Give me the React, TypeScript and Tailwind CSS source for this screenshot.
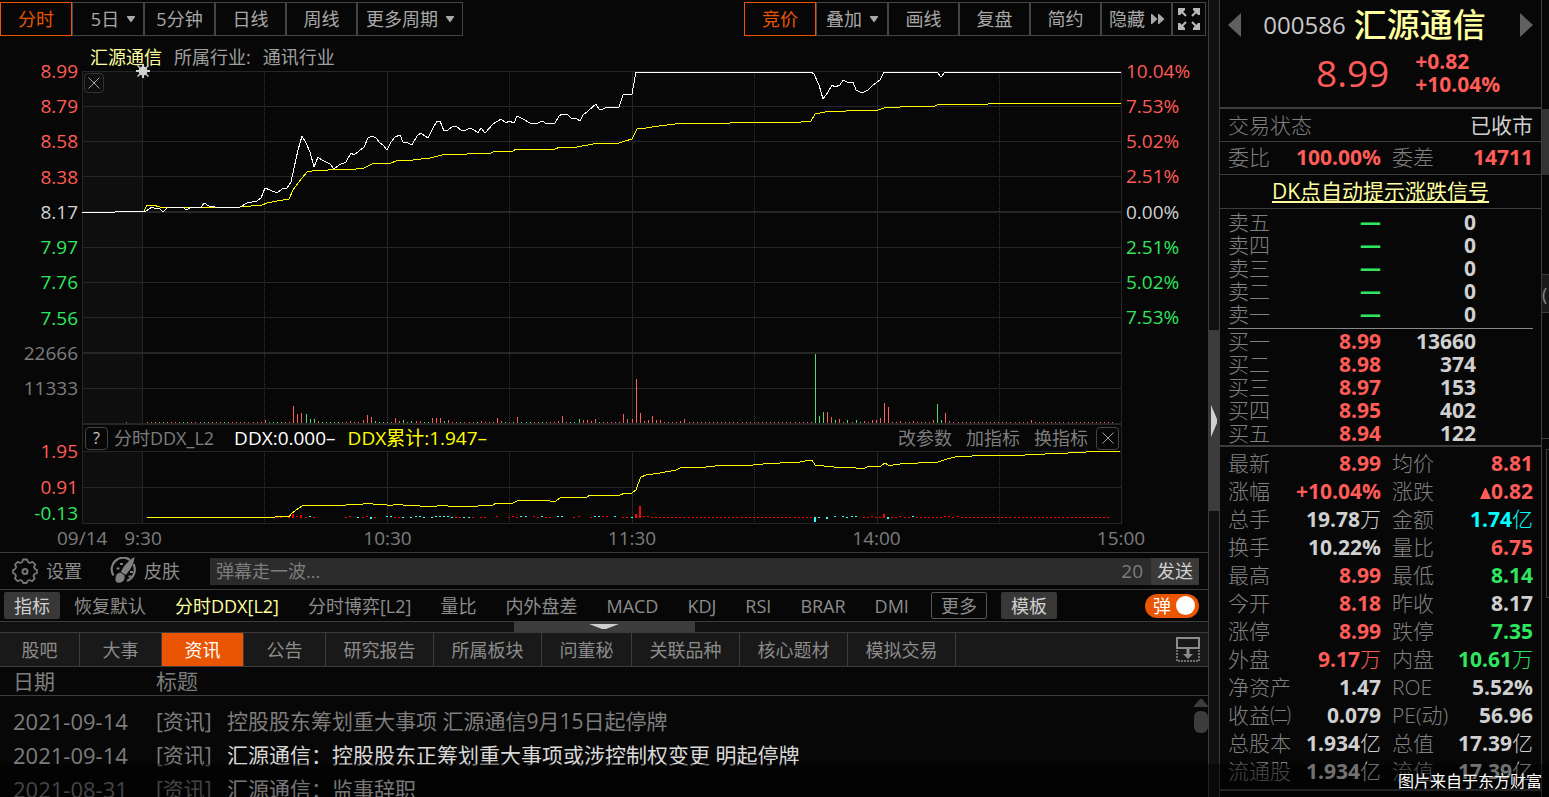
import { useState } from "react";
import clsx from "clsx";

const RED = "text-[#ff5b57]";
const GREEN = "text-[#2fe65f]";
const WHITE = "text-[#d0d0d0]";
const CYAN = "text-[#00ffff]";

const periods = [
  { label: "分时", width: "w-[72px]", active: true },
  { label: "5日", width: "w-[72px] pl-2.5", arrow: true },
  { label: "5分钟", width: "w-[71px]" },
  { label: "日线", width: "w-[71px]" },
  { label: "周线", width: "w-[71px]" },
  { label: "更多周期", width: "w-[106px]", arrow: true },
];

const tools = [
  { label: "竞价", width: "w-[72px]", active: true },
  { label: "叠加", width: "w-[72px]", arrow: true },
  { label: "画线", width: "w-[71px]" },
  { label: "复盘", width: "w-[71px]" },
  { label: "简约", width: "w-[71px]" },
];

const priceLabels = [
  ["8.99", RED],
  ["8.79", RED],
  ["8.58", RED],
  ["8.38", RED],
  ["8.17", WHITE],
  ["7.97", GREEN],
  ["7.76", GREEN],
  ["7.56", GREEN],
  ["22666", "text-[#7d7d7d]"],
  ["11333", "text-[#7d7d7d]"],
];

const percentLabels = [
  ["10.04%", RED],
  ["7.53%", RED],
  ["5.02%", RED],
  ["2.51%", RED],
  ["0.00%", WHITE],
  ["2.51%", GREEN],
  ["5.02%", GREEN],
  ["7.53%", GREEN],
];

const pricePoints =
  "82,212 115,212 117,211 146,211 149,209 152,207 154,208 160,209 163,212 168,207 182,207 187,210 191,207 201,208 204,203 209,206 215,207 240,207 247,203 257,201 261,198 265,188 270,190 277,193 282,189 287,188 291,182 294,168 298,150 302,136 306,143 310,152 314,167 318,157 322,160 330,164 334,169 339,165 346,162 351,153 354,155 359,151 364,147 368,138 372,136 376,138 380,143 383,145 387,150 391,142 395,137 400,135 403,142 408,143 412,145 417,136 421,133 425,136 428,138 433,128 437,121 440,121 444,131 448,130 453,126 457,127 461,130 466,130 470,128 474,130 478,133 481,128 485,133 493,124 501,119 506,123 509,121 514,123 517,116 523,119 530,123 538,123 542,121 547,124 555,123 559,116 562,114 567,114 571,118 577,119 580,121 583,115 588,111 596,104 599,109 603,109 607,107 619,107 623,95 625,94 632,94 634,83 636,72 811,72 814,74 819,85 823,99 828,92 832,85 835,87 840,85 843,80 847,82 853,82 856,90 862,93 868,90 873,85 880,80 884,72 937,72 941,77 945,72 1121,72";

const averagePoints =
  "144,211 147,205 153,205 160,207 240,207 251,206 262,205 267,203 277,201 289,199 293,190 302,178 307,172 312,171 328,170 356,169 364,168 372,164 391,163 396,161 413,160 430,158 442,155 467,154 491,153 495,151 513,151 516,149 555,149 560,147 577,147 593,144 605,143 619,143 625,141 632,139 637,129 646,128 659,126 683,123 730,123 760,122 801,122 811,121 815,114 825,112 846,111 878,110 887,107 900,107 935,106 939,104 988,104 990,103 1121,103";

const ddxPoints =
  "147,517 275,517 277,516 285,516 289,517 291,514 296,510 302,506 306,505 310,506 313,505 346,505 348,504 363,504 366,503 370,503 373,504 383,504 387,505 393,505 396,504 400,504 403,505 416,505 420,506 437,506 439,505 446,505 448,506 478,506 493,505 496,503 513,503 517,501 531,500 545,500 550,501 556,501 561,497 587,497 590,495 620,495 625,493 632,493 636,490 638,484 641,477 646,475 660,473 676,470 680,468 706,467 725,465 753,465 763,464 780,463 800,462 810,460 812,460 815,465 819,466 822,465 826,467 830,466 834,467 853,467 856,468 865,468 869,466 881,466 885,463 888,465 893,465 900,464 918,463 938,462 947,459 955,457 972,456 995,455 1025,455 1045,454 1068,453 1086,452 1088,451 1120,451";

// minute of the session -> bar height
const volumes: Record<number, number> = {
  30: 3, 37: 17, 38: 9, 39: 10, 40: 9, 41: 4, 42: 4, 43: 2, 51: 2, 54: 3, 55: 8, 56: 6, 57: 2,
  62: 5, 63: 2, 64: 3, 66: 2, 67: 2, 68: 2, 71: 5, 72: 5, 73: 5, 74: 2, 75: 3, 83: 2, 87: 5,
  88: 2, 92: 6, 102: 2, 103: 7, 107: 4, 108: 3, 109: 3, 110: 2, 111: 4, 118: 9, 119: 4, 120: 4,
  121: 44, 122: 10, 123: 2, 124: 3, 125: 7, 126: 3, 127: 3, 132: 2, 133: 4, 165: 69, 166: 7,
  167: 11, 168: 11, 169: 6, 170: 3, 171: 4, 173: 3, 175: 3, 177: 2, 179: 3, 180: 3, 181: 5,
  182: 20, 183: 16, 186: 2, 189: 2, 194: 3, 195: 19, 196: 3, 197: 10, 198: 2, 218: 3,
};

const falling = new Set([
  3, 5, 10, 11, 15, 17, 20, 31, 32, 33, 34, 40, 41, 42, 44, 45, 46, 47, 48, 57, 58, 59, 60, 64, 66,
  69, 70, 74, 78, 82, 89, 91, 93, 94, 95, 98, 105, 106, 107, 112, 165, 166, 167, 170, 173, 175, 176,
  195, 196,
]);

// [minute, height above the zero line (negative goes below), inflow]
const ddxBars: [number, number, boolean][] = [
  [33, 1, true], [34, 1, true], [36, 1, true], [37, 4, true], [38, 2, true], [39, 3, true],
  [40, 1, true], [41, 2, false], [42, 1, true], [50, 1, true], [51, 2, true], [53, 1, false],
  [54, 1, true], [55, 2, true], [56, -2, false], [57, 1, true], [60, 2, false], [61, 2, false],
  [62, 1, true], [63, 1, true], [64, 1, false], [66, 1, false], [67, 2, false], [68, 2, false],
  [69, 1, false], [71, 1, false], [72, 2, false], [73, 2, false], [74, 2, false], [75, 2, false],
  [76, 1, false], [77, 1, true], [78, 1, true], [79, 1, false], [80, 1, false], [81, 1, true],
  [83, 1, true], [84, 1, true], [87, 2, true], [90, 1, true], [91, 2, true], [92, 1, true],
  [93, 2, false], [94, 2, false], [96, 2, true], [97, 1, true], [98, 2, false], [99, 1, true],
  [100, 1, true], [102, 2, false], [103, 2, false], [106, 1, true], [107, 2, true], [110, 1, true],
  [111, 2, false], [112, 2, false], [113, 2, true], [114, 2, true], [116, 2, false], [118, 1, true],
  [119, 1, true], [120, 1, false], [121, 4, true], [122, 12, true], [123, 2, true], [124, 2, true],
  [165, -5, false], [166, 1, false], [168, -2, false], [170, 2, false], [172, 2, false],
  [173, 1, false], [174, 2, false], [175, 2, false], [178, 1, true], [179, 2, true], [182, 4, true],
  [183, -2, false], [186, 2, true], [189, 2, false], [197, 2, true], [198, 2, true], [200, 2, true],
];

const minuteX = (minute: number) => Math.floor(143 + minute * 4.075);

const solidColumns = [142, 387, 632, 877];
const dottedColumns = [264, 509, 754, 999];

const indicators = ["分时博弈[L2]", "量比", "内外盘差", "MACD", "KDJ", "RSI", "BRAR", "DMI"];

const tabs = [
  ["股吧", "w-[80px]"],
  ["大事", "w-[82px]"],
  ["资讯", "w-[82px]"],
  ["公告", "w-[82px]"],
  ["研究报告", "w-[108px]"],
  ["所属板块", "w-[108px]"],
  ["问董秘", "w-[90px]"],
  ["关联品种", "w-[108px]"],
  ["核心题材", "w-[108px]"],
  ["模拟交易", "w-[108px]"],
];

const news = [
  { date: "2021-09-14", title: "控股股东筹划重大事项 汇源通信9月15日起停牌", read: true },
  { date: "2021-09-14", title: "汇源通信：控股股东正筹划重大事项或涉控制权变更 明起停牌" },
  { date: "2021-08-31", title: "汇源通信：监事辞职" },
];

const asks = ["卖五", "卖四", "卖三", "卖二", "卖一"];

const bids = [
  ["买一", "8.99", "13660"],
  ["买二", "8.98", "374"],
  ["买三", "8.97", "153"],
  ["买四", "8.95", "402"],
  ["买五", "8.94", "122"],
];

type Stat = { label: string; value: string; unit?: string; color: string; up?: boolean };

const stats: [Stat, Stat][] = [
  [{ label: "最新", value: "8.99", color: RED }, { label: "均价", value: "8.81", color: RED }],
  [{ label: "涨幅", value: "+10.04%", color: RED }, { label: "涨跌", value: "0.82", color: RED, up: true }],
  [{ label: "总手", value: "19.78", unit: "万", color: WHITE }, { label: "金额", value: "1.74", unit: "亿", color: CYAN }],
  [{ label: "换手", value: "10.22%", color: WHITE }, { label: "量比", value: "6.75", color: RED }],
  [{ label: "最高", value: "8.99", color: RED }, { label: "最低", value: "8.14", color: GREEN }],
  [{ label: "今开", value: "8.18", color: RED }, { label: "昨收", value: "8.17", color: WHITE }],
  [{ label: "涨停", value: "8.99", color: RED }, { label: "跌停", value: "7.35", color: GREEN }],
  [{ label: "外盘", value: "9.17", unit: "万", color: RED }, { label: "内盘", value: "10.61", unit: "万", color: GREEN }],
  [{ label: "净资产", value: "1.47", color: WHITE }, { label: "ROE", value: "5.52%", color: WHITE }],
  [{ label: "收益㈡", value: "0.079", color: WHITE }, { label: "PE(动)", value: "56.96", color: WHITE }],
  [{ label: "总股本", value: "1.934", unit: "亿", color: WHITE }, { label: "总值", value: "17.39", unit: "亿", color: WHITE }],
  [{ label: "流通股", value: "1.934", unit: "亿", color: WHITE }, { label: "流值", value: "17.39", unit: "亿", color: WHITE }],
];

function ToolButton({ label, width, active, arrow }: { label: string; width: string; active?: boolean; arrow?: boolean }) {
  return (
    <button
      className={clsx(
        "flex h-[34px] shrink-0 items-center justify-center gap-2 border text-lg leading-6",
        width,
        active ? "border-[#ea5504] text-[#ea5504]" : "border-[#444] text-[#a8a8a8]"
      )}
    >
      {label}
      {arrow && (
        <svg width="8" height="6" viewBox="0 0 8 6" fill="currentColor">
          <path d="M0 0h8v1L4.500 6h-1L0 1z" />
        </svg>
      )}
    </button>
  );
}

function CloseIcon() {
  return (
    <svg width="12" height="12" viewBox="0 0 12 12" stroke="#a0a0a0" strokeWidth="1">
      <path d="M0.500 0.500l11 11M11.500 0.500l-11 11" />
    </svg>
  );
}

function Toolbar() {
  return (
    <div className="flex h-9 shrink-0 justify-between pt-0.5 pr-0.5">
      <div className="flex">
        {periods.map((item) => (
          <ToolButton key={item.label} {...item} />
        ))}
      </div>
      <div className="flex">
        {tools.map((item) => (
          <ToolButton key={item.label} {...item} />
        ))}
        <button className="flex h-[34px] w-[71px] items-center justify-center gap-1.5 border border-[#444] text-lg leading-6 text-[#a8a8a8]">
          隐藏
          <svg width="13" height="10" viewBox="0 0 13 10" fill="currentColor">
            <path d="M0 0h1l5 4.500v1L1 10H0zM7 0h1l5 4.500v1L8 10H7z" />
          </svg>
        </button>
        <button aria-label="全屏" className="flex h-[34px] w-[34px] items-center justify-center border border-[#444] text-[#b8b8b8]">
          <svg width="22" height="22" viewBox="0 0 22 22" fill="currentColor" stroke="currentColor" strokeWidth="2">
            <path d="M2 2l6 6M20 2l-6 6M2 20l6-6M20 20l-6-6" fill="none" />
            <path d="M0 0h7v2L2 7H0zM22 0v7h-2l-5-5V0zM0 22v-7h2l5 5v2zM22 22h-7v-2l5-5h2z" stroke="none" />
          </svg>
        </button>
      </div>
    </div>
  );
}

function PriceChart() {
  const minutes = Array.from({ length: 238 }, (_, i) => i + 1);
  return (
    <svg
      className="block h-[354px] w-full overflow-visible"
      viewBox="82 71 1040 354"
      preserveAspectRatio="none"
      shapeRendering="crispEdges"
    >
      <rect x="83" y="72" width="59" height="351" fill="#0e0e0e" />
      <g fill="#262626">
        {[71, 106, 141, 176, 247, 282, 317, 388].map((y) => (
          <rect key={y} x="82" y={y} width="1040" height="1" />
        ))}
        {[211, 352, 423].map((y) => (
          <rect key={y} x="82" y={y} width="1040" height="2" />
        ))}
        {[82, ...solidColumns, 1121].map((x) => (
          <rect key={x} x={x} y="71" width="1" height="353" />
        ))}
      </g>
      {dottedColumns.map((x) => (
        <path key={x} d={`M${x + 0.5} 72V423`} stroke="#333" strokeDasharray="1 1" />
      ))}
      {minutes.map((m) => {
        const h = volumes[m] ?? 1;
        return <rect key={m} x={minuteX(m)} y={423 - h} width="1" height={h} fill={falling.has(m) ? "#4fdc6c" : "#ff5b57"} />;
      })}
      <rect x="126" y="422" width="1" height="1" fill="#ff5b57" />
      <polyline points={averagePoints} fill="none" stroke="#ffff00" />
      <polyline points={pricePoints} fill="none" stroke="#ffffff" />
      <g fill="#d0d0d0" shapeRendering="auto">
        <circle cx="143" cy="71" r="4.500" />
        <path d="M142 64h2v14h-2zM136 70h14v2h-14zM138 65l11 11-1 1-11-11zM148 65l1 1-11 11-1-1z" />
      </g>
    </svg>
  );
}

function DdxChart() {
  const steady = Array.from({ length: 113 }, (_, i) => i + 125).filter(
    (m) => (m < 165 || m > 176) && !ddxBars.some(([minute]) => minute === m)
  );
  return (
    <svg
      className="block h-[73px] w-full"
      viewBox="82 451 1040 73"
      preserveAspectRatio="none"
      shapeRendering="crispEdges"
    >
      <rect x="83" y="452" width="59" height="71" fill="#0e0e0e" />
      <g fill="#262626">
        {[451, 487, 523].map((y) => (
          <rect key={y} x="82" y={y} width="1040" height="1" />
        ))}
        {[82, ...solidColumns, 1121].map((x) => (
          <rect key={x} x={x} y="451" width="1" height="73" />
        ))}
      </g>
      {dottedColumns.map((x) => (
        <path key={x} d={`M${x + 0.5} 453V523`} stroke="#333" strokeDasharray="1 1" />
      ))}
      {steady.map((m) => (
        <rect key={m} x={minuteX(m) - 1} y="517" width="2" height="1" fill="#ff0000" />
      ))}
      {ddxBars.map(([m, h, inflow]) => (
        <rect
          key={m}
          x={minuteX(m) - 1}
          y={h > 2 ? 518 - h : h === 2 ? 516 : 517}
          width="2"
          height={h > 2 ? h : h < 0 ? -h : 1}
          fill={inflow ? "#ff0000" : "#3fffff"}
        />
      ))}
      <polyline points={ddxPoints} fill="none" stroke="#ffff00" />
    </svg>
  );
}

function ChartPanel() {
  return (
    <section className="shrink-0">
      <div className="flex h-[35px] items-center gap-3 pt-1.5 pl-[90px] text-lg leading-7">
        <span className="text-[#ffffa0]">汇源通信</span>
        <span className="text-[#a0a0a0]">所属行业:</span>
        <span className="text-[#a0a0a0]">通讯行业</span>
      </div>

      <div className="grid grid-cols-[82px_1fr_86px]">
        <div className="-mt-2.5 flex h-[337px] flex-col justify-between pr-1 text-right text-[19px] leading-5">
          {priceLabels.map(([text, color]) => (
            <span key={text} className={color}>{text}</span>
          ))}
        </div>
        <div className="relative">
          <PriceChart />
          <button aria-label="关闭" className="absolute top-0.5 left-0.5 flex size-5 items-center justify-center rounded-sm border border-[#333]">
            <CloseIcon />
          </button>
        </div>
        <div className="-mt-2.5 flex h-[266px] flex-col justify-between pl-1 text-[19px] leading-5">
          {percentLabels.map(([text, color], i) => (
            <span key={i} className={color}>{text}</span>
          ))}
        </div>

        <div />
        <div className="flex h-[26px] items-center justify-between border-x border-[#262626] px-0.5 text-lg leading-6 text-[#7d7d7d]">
          <div className="flex items-center">
            <button className="mr-1.5 flex size-[23px] items-center justify-center rounded-sm border border-[#444] text-base text-[#c8c8c8]">?</button>
            <span>分时DDX_L2</span>
            <span className="ml-5 text-[19px] text-white">DDX:0.000–</span>
            <span className="ml-3 text-[19px] text-[#ffff00]">DDX累计:1.947–</span>
          </div>
          <div className="flex items-center gap-3.5">
            <button>改参数</button>
            <button>加指标</button>
            <button>换指标</button>
            <button aria-label="关闭指标" className="-ml-1.5 flex size-[23px] items-center justify-center rounded-sm border border-[#444]">
              <CloseIcon />
            </button>
          </div>
        </div>
        <div />

        <div className="-mt-2.5 flex h-[83px] flex-col pr-1 text-right text-[19px] leading-5">
          <span className={RED}>1.95</span>
          <span className={clsx("mt-4", RED)}>0.91</span>
          <span className={clsx("mt-1.5", GREEN)}>-0.13</span>
        </div>
        <DdxChart />
        <div />
      </div>

      <div className="flex h-7 items-center pr-[52px] text-[19px] leading-6 text-[#7d7d7d]">
        <span className="w-[108px] pl-[57px]">09/14</span>
        <div className="flex flex-1 justify-between">
          {["9:30", "10:30", "11:30", "14:00", "15:00"].map((time) => (
            <span key={time} className="w-[70px] text-center">{time}</span>
          ))}
        </div>
      </div>
    </section>
  );
}

function CommentBar() {
  return (
    <div className="flex h-[37px] shrink-0 items-center border-t border-[#3c3c3c] pr-[9px] pl-3 text-lg leading-6 text-[#8c8c8c]">
      <button className="flex items-center gap-2">
        <svg width="26" height="26" viewBox="0 0 26 26" fill="none" stroke="#777" strokeWidth="2">
          <path
            d="M11 1.500h4l1 2.500 2 1 2.500-1.200 2.800 2.800L22 9l1 2 2 1v3l-2.500 1-1 2 1.200 2.500-2.800 2.800L17.500 22l-2 1-.8 2h-3.500l-1-2-2-1-2.500 1.200-2.800-2.800L4 18l-1-2-2-1v-3l2.300-1 .9-2L3 6.600l2.800-2.800L8.200 5l2-1z"
            strokeLinejoin="round"
            strokeWidth="1.800"
          />
          <circle cx="13" cy="13.500" r="2.500" />
        </svg>
        设置
      </button>
      <button className="ml-7 flex items-center gap-1.5">
        <svg width="28" height="28" viewBox="0 0 28 28" fill="none" stroke="#808080" strokeWidth="2.200">
          <path d="M20 3A11.500 11.500 0 0 0 3.500 18.500M23.500 7c3 7 .5 13.500-6.500 17" />
          <path d="M24.500 0c-5.500 3-12 10-13.500 15l4.500 3C20 13.500 24 7 24.500 0z" fill="#808080" stroke="none" />
          <path d="M10.500 15.500c-4 .5-4.500 3-5 6-.5 3 1 5 5 4 4-1 4.500-4.500 4-7z" fill="#808080" stroke="none" />
          <path d="M6.500 11.500h3M10 7h3M18.500 19.500h3M20 15h3" />
        </svg>
        皮肤
      </button>
      <div className="ml-[30px] flex h-[27px] flex-1 items-center bg-[#2b2b2b]">
        <input
          aria-label="弹幕"
          placeholder="弹幕走一波..."
          className="h-full min-w-0 flex-1 bg-transparent px-1.5 text-lg placeholder:text-[#7d7d7d] focus:outline-none"
        />
        <span className="px-2 text-[19px] text-[#7d7d7d]">20</span>
        <button className="h-full w-12 bg-[#3a3a3a] text-[#d0d0d0]">发送</button>
      </div>
    </div>
  );
}

function IndicatorBar() {
  const [on, setOn] = useState(true);
  return (
    <div className="flex h-8 shrink-0 items-center border-t border-[#3c3c3c] pr-[9px] pl-1 text-lg leading-6 text-[#8c8c8c]">
      <button className="h-[27px] w-14 rounded-xs bg-[#383838] text-[#d0d0d0]">指标</button>
      <div className="ml-3.5 flex gap-[29px] whitespace-nowrap">
        <button>恢复默认</button>
        <button className="text-[#ffffa0]">分时DDX[L2]</button>
        {indicators.map((name) => (
          <button key={name}>{name}</button>
        ))}
      </div>
      <button className="ml-[22px] h-[27px] w-14 rounded-xs border border-[#555] leading-5">更多</button>
      <button className="ml-3.5 h-[27px] w-14 rounded-xs bg-[#383838] text-[#d0d0d0]">模板</button>
      <button
        role="switch"
        aria-checked={on}
        onClick={() => setOn(!on)}
        className={clsx(
          "ml-auto flex h-6 w-[54px] items-center justify-between rounded-full pr-1 pl-2 text-white",
          on ? "bg-[#ea5504]" : "bg-[#555]"
        )}
      >
        弹
        <span className="size-[19px] rounded-full bg-white" />
      </button>
    </div>
  );
}

function NewsPanel() {
  const [current, setCurrent] = useState("资讯");
  return (
    <section className="flex min-h-0 flex-1 flex-col">
      {/* drag handle between chart and news */}
      <div className="flex h-[11px] shrink-0 justify-center border-t border-[#3c3c3c] bg-[#111]">
        <div className="flex w-[181px] justify-center bg-[#3c3c3c]">
          <svg width="30" height="10" viewBox="0 0 30 10" fill="#d0d0d0">
            <path d="M0 2h30L17 7h-4z" />
          </svg>
        </div>
      </div>

      <div className="flex h-[35px] shrink-0 items-stretch border-y border-[#3c3c3c] bg-[#191919] text-lg leading-6">
        {tabs.map(([label, width]) => (
          <button
            key={label}
            onClick={() => setCurrent(label)}
            className={clsx(
              "border-r border-[#3c3c3c]",
              width,
              current === label ? "bg-[#ea5504] text-white" : "text-[#8c8c8c]"
            )}
          >
            {label}
          </button>
        ))}
        <button aria-label="展开" className="ml-auto pr-2">
          <svg width="24" height="25" viewBox="0 0 24 25" fill="none" stroke="#8c8c8c">
            <rect x="1" y="1" width="22" height="10" strokeWidth="2" />
            <path d="M1 13v11h22V13" strokeDasharray="2 1" strokeWidth="1.500" />
            <path d="M12 12v6" strokeWidth="3" />
            <path d="M7 17h10l-5 5z" fill="#8c8c8c" stroke="none" />
          </svg>
        </button>
      </div>

      <div className="relative min-h-0 flex-1 overflow-hidden">
        <table className="w-full table-fixed border-collapse text-left text-[21px] leading-7 text-[#7d7d7d]">
          <colgroup>
            <col className="w-[156px]" />
            <col className="w-[71px]" />
            <col />
          </colgroup>
          <thead>
            <tr className="h-7 border-b border-[#3c3c3c]">
              <th className="pl-[13px] font-normal">日期</th>
              <th colSpan={2} className="font-normal">标题</th>
            </tr>
          </thead>
          <tbody>
            <tr className="h-2"><td colSpan={3} /></tr>
            {news.map((item) => (
              <tr key={item.title} className="h-[34px]">
                <td className="pl-[13px] text-[22px]">{item.date}</td>
                <td>[资讯]</td>
                <td>
                  <a href="#" className={item.read ? "text-[#7d7d7d]" : "text-[#d8d8d8]"}>{item.title}</a>
                </td>
              </tr>
            ))}
          </tbody>
        </table>
        <div className="absolute top-8 right-0 flex flex-col items-center gap-1">
          <svg width="14" height="8" viewBox="0 0 14 8" fill="#3c3c3c">
            <path d="M6 0h2l6 7v1H0V7z" />
          </svg>
          <div className="h-[22px] w-3.5 rounded-md bg-[#3c3c3c]" />
        </div>
      </div>
    </section>
  );
}

function StatCells({ stat, second }: { stat: Stat; second?: boolean }) {
  return (
    <>
      <th scope="row" className={clsx("font-light whitespace-nowrap text-[#808080]", second && "pl-[11px]")}>{stat.label}</th>
      <td className={clsx("text-right font-bold whitespace-nowrap", stat.color)}>
        {stat.up && (
          <svg className="inline" width="11" height="11" viewBox="0 0 11 11" fill="currentColor">
            <path d="M5 0h1l5 11H0z" />
          </svg>
        )}
        {stat.value}
        {stat.unit && <span className="font-light">{stat.unit}</span>}
      </td>
    </>
  );
}

function QuotePanel() {
  return (
    <aside className="w-[323px] shrink-0 overflow-hidden border-x border-[#3c3c3c] text-[21px] leading-[23px]">
      <header className="h-[109px] border-b-2 border-[#3c3c3c] px-2">
        <div className="flex h-[50px] items-center justify-between text-[#606060]">
          <button aria-label="上一只">
            <svg width="13" height="24" viewBox="0 0 13 24" fill="currentColor"><path d="M13 0v24L0 12z" /></svg>
          </button>
          <h1 className="mr-3 flex items-center gap-2 leading-10">
            <span className="text-2xl text-[#c8c8c8]">000586</span>
            <span className="text-[33px] font-medium text-[#ffffa0]">汇源通信</span>
          </h1>
          <button aria-label="下一只">
            <svg width="13" height="24" viewBox="0 0 13 24" fill="currentColor"><path d="M0 0l13 12L0 24z" /></svg>
          </button>
        </div>
        <div className={clsx("flex items-center gap-[26px] pl-[88px]", RED)}>
          <span className="text-[37px] leading-10 font-medium">8.99</span>
          <span className="font-bold">
            +0.82
            <br />
            +10.04%
          </span>
        </div>
      </header>

      <div className="flex h-[33px] items-center justify-between border-b border-[#3c3c3c] px-2">
        <span className="font-light text-[#808080]">交易状态</span>
        <span className={WHITE}>已收市</span>
      </div>
      <table className="w-full table-fixed border-b border-[#3c3c3c] text-left">
        <tbody>
          <tr className="h-8">
            <th scope="row" className="w-[60px] pl-2 font-light text-[#808080]">委比</th>
            <td className={clsx("w-[101px] text-right font-bold", RED)}>100.00%</td>
            <th scope="row" className="w-[70px] pl-[11px] font-light text-[#808080]">委差</th>
            <td className={clsx("pr-2 text-right font-bold", RED)}>14711</td>
          </tr>
        </tbody>
      </table>
      <div className="flex h-[34px] items-center justify-center border-b border-[#3c3c3c]">
        <a href="#" className="text-[#ffffa0] underline underline-offset-2">DK点自动提示涨跌信号</a>
      </div>

      <div className="border-b-2 border-[#3c3c3c] px-2 pt-0.5">
        <table className="w-full table-fixed text-left">
          <tbody>
            {asks.map((name) => (
              <tr key={name} className="h-[23px]">
                <th scope="row" className="w-[60px] font-light text-[#808080]">{name}</th>
                <td className={clsx("w-[93px] text-right font-bold", GREEN)}>—</td>
                <td className={clsx("pr-[57px] text-right font-bold", WHITE)}>0</td>
              </tr>
            ))}
          </tbody>
        </table>
        <hr className="mt-0.5 mb-px border-[#888]" />
        <table className="w-full table-fixed text-left">
          <tbody>
            {bids.map(([name, price, volume]) => (
              <tr key={name} className="h-[23px]">
                <th scope="row" className="w-[60px] font-light text-[#808080]">{name}</th>
                <td className={clsx("w-[93px] text-right font-bold", RED)}>{price}</td>
                <td className={clsx("pr-[57px] text-right font-bold", WHITE)}>{volume}</td>
              </tr>
            ))}
          </tbody>
        </table>
      </div>

      <div className="border-b-2 border-[#3c3c3c] px-2 pt-[3px] pb-[3px]">
        <table className="w-full table-fixed text-left">
          <colgroup>
            <col className="w-[64px]" />
            <col className="w-[89px]" />
            <col className="w-[66px]" />
            <col />
          </colgroup>
          <tbody>
            {stats.map(([left, right]) => (
              <tr key={left.label} className="h-7">
                <StatCells stat={left} />
                <StatCells stat={right} second />
              </tr>
            ))}
          </tbody>
        </table>
      </div>
    </aside>
  );
}

export default function App() {
  return (
    <div className="relative flex h-screen overflow-hidden bg-[#070707] font-['Open_Sans','Noto_Sans_CJK_SC',sans-serif]">
      <main className="flex min-w-0 flex-1 flex-col">
        <Toolbar />
        <ChartPanel />
        <CommentBar />
        <IndicatorBar />
        <NewsPanel />
      </main>

      {/* splitter */}
      <div className="flex w-[11px] shrink-0 flex-col border-l border-[#3c3c3c] bg-[#111] pt-[330px]">
        <div className="flex h-[181px] items-center justify-center bg-[#3c3c3c]">
          <svg width="6" height="32" viewBox="0 0 6 32" fill="#d0d0d0">
            <path d="M0 0l6 14v4L0 32z" />
          </svg>
        </div>
      </div>

      <QuotePanel />

      {/* edge of the next panel */}
      <div className="w-[7px] shrink-0 overflow-hidden pt-[109px] text-lg leading-[38px] text-[#8c8c8c]">
        <div className="h-[66px] bg-[#333]" />
        <div className="mt-[99px] h-[39px] border-y border-[#3c3c3c] bg-[#191919]">(</div>
        <div className="mt-[125px] h-[11px] border-t border-[#3c3c3c]" />
        <div className="ml-1 h-[149px] border-y border-l border-[#3c3c3c]" />
      </div>

      <div className="pointer-events-none absolute inset-x-0 bottom-0 flex h-[33px] items-center justify-end bg-black/45 pr-[7px] text-base leading-6 text-white">
        图片来自于东方财富
      </div>
    </div>
  );
}
